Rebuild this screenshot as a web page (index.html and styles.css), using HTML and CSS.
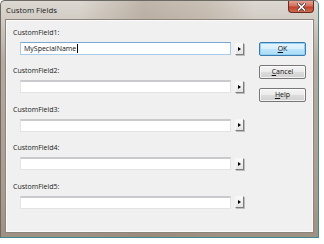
FILE: index.html
```html
<!DOCTYPE html>
<html>
<head>
<meta charset="utf-8">
<link rel="stylesheet" href="styles.css">
</head>
<body>
<div class="window">
  <div class="titlebar">
    <span class="title">Custom Fields</span>
    <span class="close"><svg width="9" height="8" viewBox="0 0 9 8"><path d="M1.5 1 L7.5 7 M7.5 1 L1.5 7" stroke="#3a2a2a" stroke-width="3" stroke-linecap="square"/><path d="M1.5 1 L7.5 7 M7.5 1 L1.5 7" stroke="#fff" stroke-width="1.6" stroke-linecap="square"/></svg></span>
  </div>
  <div class="client">
    <div class="fields">
      <div class="field">
        <div class="label">CustomField1:</div>
        <div class="input-row">
          <div class="input focused">MySpecialName<span class="caret"></span></div>
          <div class="arrow"><span class="tri"></span></div>
        </div>
      </div>
      <div class="field">
        <div class="label">CustomField2:</div>
        <div class="input-row">
          <div class="input"></div>
          <div class="arrow"><span class="tri"></span></div>
        </div>
      </div>
      <div class="field">
        <div class="label">CustomField3:</div>
        <div class="input-row">
          <div class="input"></div>
          <div class="arrow"><span class="tri"></span></div>
        </div>
      </div>
      <div class="field">
        <div class="label">CustomField4:</div>
        <div class="input-row">
          <div class="input"></div>
          <div class="arrow"><span class="tri"></span></div>
        </div>
      </div>
      <div class="field">
        <div class="label">CustomField5:</div>
        <div class="input-row">
          <div class="input"></div>
          <div class="arrow"><span class="tri"></span></div>
        </div>
      </div>
    </div>
    <div class="buttons">
      <div class="btn default"><u>O</u>K</div>
      <div class="btn"><u>C</u>ancel</div>
      <div class="btn"><u>H</u>elp</div>
    </div>
  </div>
</div>
</body>
</html>
```

FILE: styles.css
```css
html, body {
  margin: 0;
  padding: 0;
  background: #ffffff;
}
body {
  font-family: "Open Sans", "DejaVu Sans", sans-serif;
  width: 324px;
  height: 244px;
  overflow: hidden;
}
.window {
  box-sizing: border-box;
  width: 319px;
  height: 238px;
  border: 1px solid;
  border-color: #6d6a66 #3d8a8e #3d8a8e #6d6a66;
  border-radius: 5px 5px 0 0;
  padding: 0 4px 4px 4px;
  display: flex;
  flex-direction: column;
  background:
    linear-gradient(90deg, rgba(210,204,196,0.0) 25%, rgba(150,130,112,0.4) 45%, rgba(160,140,122,0.3) 65%, rgba(210,204,196,0) 80%),
    linear-gradient(180deg, #dcd8d2 0px, #d2ccc4 18px, #b6aa9e 60px, #a99a8b 200px, #9e9082 238px);
}
.titlebar {
  height: 18px;
  display: flex;
  align-items: flex-start;
}
.title {
  font-size: 7.8px;
  line-height: 19px;
  color: #1a1a1a;
  padding-left: 1px;
}
.close {
  margin-left: auto;
  width: 26px;
  height: 12px;
  box-sizing: border-box;
  border: 1px solid #6b2a22;
  border-top: none;
  border-radius: 0 0 4px 4px;
  background: linear-gradient(180deg, #e5a093 0%, #d2705e 45%, #c2402b 55%, #d06a4e 100%);
  display: flex;
  align-items: center;
  justify-content: center;
}
.close svg { display: block; }
.client {
  flex: 1;
  box-sizing: border-box;
  background: #f0f0f0;
  border: 1px solid #8c857d;
  box-shadow: inset 0 0 0 1px #fbfbfb;
  display: flex;
  padding: 7px 0 0 7px;
}
.fields {
  display: flex;
  flex-direction: column;
}
.field {
  margin-bottom: 10.4px;
}
.label {
  font-size: 7px;
  line-height: 11px;
  color: #1a1a1a;
}
.input-row {
  margin-top: 4px;
  padding-left: 7px;
  display: flex;
  align-items: center;
}
.input {
  box-sizing: border-box;
  width: 211px;
  height: 13px;
  background: #ffffff;
  border: 1px solid #e2e3e6;
  border-top: 2px solid #c9cacd;
  font-size: 7px;
  line-height: 10px;
  padding-left: 3px;
  color: #111;
  display: flex;
  align-items: center;
}
.input.focused {
  border-color: #a8cbea;
  border-top: 1px solid #7ca7cf;
}
.caret {
  display: inline-block;
  width: 0;
  height: 9px;
  border-left: 1px solid #000;
  margin-left: 0.5px;
}
.arrow {
  box-sizing: border-box;
  width: 9px;
  height: 12px;
  margin-left: 4px;
  background: linear-gradient(180deg, #fafafa, #e4e4e4);
  border: 1px solid;
  border-color: #f6f6f6 #7d7d7d #7d7d7d #f6f6f6;
  box-shadow: 1px 1px 0 #bdbdbd;
  display: flex;
  align-items: center;
  justify-content: center;
}
.tri {
  width: 0;
  height: 0;
  border-top: 2.5px solid transparent;
  border-bottom: 2.5px solid transparent;
  border-left: 3px solid #000;
}
.buttons {
  margin-left: 15px;
  padding-top: 15px;
  display: flex;
  flex-direction: column;
  gap: 9px;
}
.btn {
  box-sizing: border-box;
  width: 47px;
  height: 14px;
  border: 1px solid #777;
  border-radius: 2px;
  background: linear-gradient(180deg, #f4f4f4 0%, #ebebeb 48%, #dcdcdc 52%, #d0d0d0 100%);
  box-shadow: inset 0 0 0 1px rgba(255,255,255,0.7);
  font-size: 7px;
  line-height: 12px;
  text-align: center;
  color: #111;
}
.btn u {
  text-decoration-thickness: 0.6px;
  text-underline-offset: 1px;
}
.btn.default {
  border-color: #3d7bad;
  background: linear-gradient(180deg, #e8f5fc 0%, #d8eefb 48%, #bde5fb 52%, #a9dcf7 100%);
  box-shadow: inset 0 0 0 1px #8fd2f5;
}
```
